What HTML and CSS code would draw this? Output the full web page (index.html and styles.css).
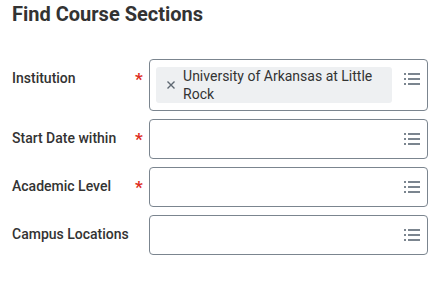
FILE: index.html
```html
<!DOCTYPE html>
<html>
<head>
<meta charset="utf-8">
<link rel="stylesheet" href="styles.css">
</head>
<body>
<div class="page">
  <h1 class="title">Find Course Sections</h1>
  <div class="form">
    <div class="row">
      <div class="label">Institution</div>
      <div class="req">*</div>
      <div class="field field-tall">
        <div class="chip">
          <span class="chip-x">
            <svg width="10" height="10" viewBox="0 0 10 10"><path d="M1.5 1.5L8.5 8.5M8.5 1.5L1.5 8.5" stroke="#5e6872" stroke-width="1.4" fill="none"/></svg>
          </span>
          <span class="chip-text">University of Arkansas at Little Rock</span>
        </div>
        <span class="menu">
          <svg width="16" height="14" viewBox="0 0 16 14"><g fill="#7b858f"><rect x="0" y="1" width="2" height="2"/><rect x="4" y="1" width="12" height="2"/><rect x="0" y="6" width="2" height="2"/><rect x="4" y="6" width="12" height="2"/><rect x="0" y="11" width="2" height="2"/><rect x="4" y="11" width="12" height="2"/></g></svg>
        </span>
      </div>
    </div>
    <div class="row">
      <div class="label">Start Date within</div>
      <div class="req">*</div>
      <div class="field">
        <span class="menu">
          <svg width="16" height="14" viewBox="0 0 16 14"><g fill="#7b858f"><rect x="0" y="1" width="2" height="2"/><rect x="4" y="1" width="12" height="2"/><rect x="0" y="6" width="2" height="2"/><rect x="4" y="6" width="12" height="2"/><rect x="0" y="11" width="2" height="2"/><rect x="4" y="11" width="12" height="2"/></g></svg>
        </span>
      </div>
    </div>
    <div class="row">
      <div class="label">Academic Level</div>
      <div class="req">*</div>
      <div class="field">
        <span class="menu">
          <svg width="16" height="14" viewBox="0 0 16 14"><g fill="#7b858f"><rect x="0" y="1" width="2" height="2"/><rect x="4" y="1" width="12" height="2"/><rect x="0" y="6" width="2" height="2"/><rect x="4" y="6" width="12" height="2"/><rect x="0" y="11" width="2" height="2"/><rect x="4" y="11" width="12" height="2"/></g></svg>
        </span>
      </div>
    </div>
    <div class="row">
      <div class="label">Campus Locations</div>
      <div class="req"></div>
      <div class="field">
        <span class="menu">
          <svg width="16" height="14" viewBox="0 0 16 14"><g fill="#7b858f"><rect x="0" y="1" width="2" height="2"/><rect x="4" y="1" width="12" height="2"/><rect x="0" y="6" width="2" height="2"/><rect x="4" y="6" width="12" height="2"/><rect x="0" y="11" width="2" height="2"/><rect x="4" y="11" width="12" height="2"/></g></svg>
        </span>
      </div>
    </div>
  </div>
</div>
</body>
</html>
```
FILE: styles.css
```css
html, body {
  margin: 0;
  padding: 0;
  background: #ffffff;
}
body {
  font-family: Roboto, "Liberation Sans", sans-serif;
  color: #333333;
}
.page {
  padding: 2px 14px 0 12px;
}
.title {
  margin: 0;
  font-size: 20px;
  font-weight: 700;
  line-height: 24px;
  color: #333333;
}
.form {
  margin-top: 33px;
  display: flex;
  flex-direction: column;
  gap: 8px;
}
.row {
  display: grid;
  grid-template-columns: 123px 14px 279px;
  align-items: start;
}
.label {
  font-size: 14px;
  font-weight: 500;
  line-height: 39px;
  color: #333333;
}
.req {
  color: #de2e21;
  font-size: 17px;
  font-weight: 700;
  line-height: 40px;
}
.field {
  box-sizing: border-box;
  height: 40px;
  border: 1px solid #7b858f;
  border-radius: 4px;
  display: flex;
  align-items: flex-start;
  justify-content: space-between;
  padding: 0 7px 0 6px;
}
.field-tall {
  height: 52px;
  padding-top: 7px;
}
.field .menu {
  margin-left: auto;
  margin-top: 12px;
  display: flex;
}
.field-tall .menu {
  margin-top: 5px;
}
.chip {
  width: 236px;
  box-sizing: border-box;
  background: #eef0f2;
  border-radius: 3px;
  display: flex;
  align-items: center;
  padding: 0 8px 0 10px;
  height: 36px;
}
.chip-x {
  display: flex;
  width: 19px;
}
.chip-text {
  font-size: 14px;
  line-height: 18px;
  color: #333333;
}
```
